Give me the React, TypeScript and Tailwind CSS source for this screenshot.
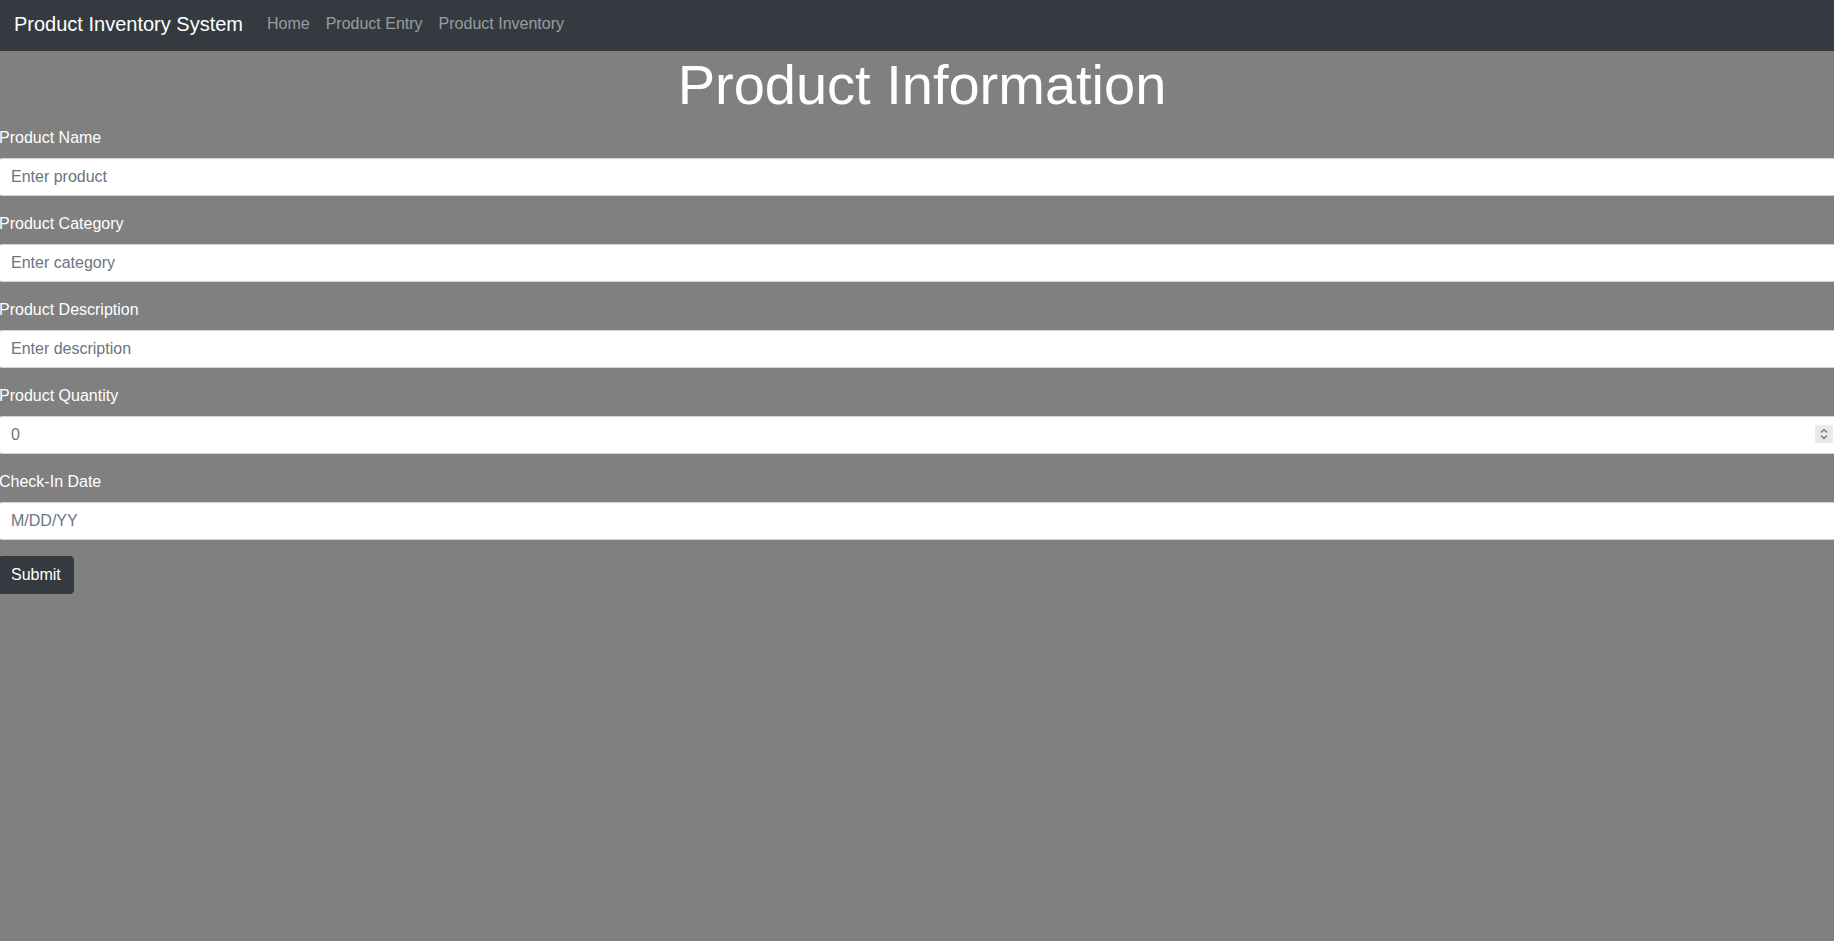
import React from "react";

const fields = [
	{ label: "Product Name", placeholder: "Enter product", type: "text" },
	{ label: "Product Category", placeholder: "Enter category", type: "text" },
	{ label: "Product Description", placeholder: "Enter description", type: "text" },
	{ label: "Product Quantity", placeholder: "0", type: "number" },
	{ label: "Check-In Date", placeholder: "M/DD/YY", type: "text" },
];

function Navbar() {
	return (
		<nav className="flex h-[51px] items-start bg-[#343a40] pl-[14px] pt-[9px]">
			<a href="#" className="mr-4 text-[20px] leading-[30px] text-white">
				Product Inventory System
			</a>
			<ul className="mt-[3px] flex">
				{["Home", "Product Entry", "Product Inventory"].map((item) => (
					<li key={item}>
						<a href="#" className="block px-2 text-base leading-[24px] text-white/50">
							{item}
						</a>
					</li>
				))}
			</ul>
		</nav>
	);
}

function Spinner() {
	return (
		<span className="pointer-events-none absolute right-[13px] top-[9px] flex h-[18px] w-[18px] items-center justify-center rounded-[2px] bg-[#e9e9ed]">
			<svg width="10" height="14" viewBox="0 0 10 14" fill="none" stroke="#75757d" strokeWidth="1.4">
				<path d="M2 5.5 5 2.5 8 5.5" />
				<path d="M2 8.5 5 11.5 8 8.5" />
			</svg>
		</span>
	);
}

export default function App() {
	return (
		<div className="min-h-screen overflow-x-hidden bg-[#808080] font-['Liberation_Sans',Arial,sans-serif] text-white">
			<Navbar />
			<main className="-ml-[2px] w-[1848px]">
				<h1 className="mb-2 text-center text-[56px] font-light leading-[1.2]">
					Product Information
				</h1>
				<form onSubmit={(e) => e.preventDefault()}>
					{fields.map((f) => (
						<div key={f.label} className="mb-4">
							<label className="mb-2 block pl-px text-base leading-[1.5]">{f.label}</label>
							<div className="relative">
								<input
									type={f.type}
									placeholder={f.placeholder}
									className="block h-[38px] w-full rounded-[4px] border border-[#ced4da] bg-white px-3 text-base text-[#495057] [appearance:textfield] placeholder:text-[#6c757d] focus:outline-none [&::-webkit-inner-spin-button]:appearance-none [&::-webkit-outer-spin-button]:appearance-none"
								/>
								{f.type === "number" && <Spinner />}
							</div>
						</div>
					))}
					<button
						type="submit"
						className="h-[38px] rounded-[4px] border border-[#343a40] bg-[#343a40] px-3 text-base text-white"
					>
						Submit
					</button>
				</form>
			</main>
		</div>
	);
}
